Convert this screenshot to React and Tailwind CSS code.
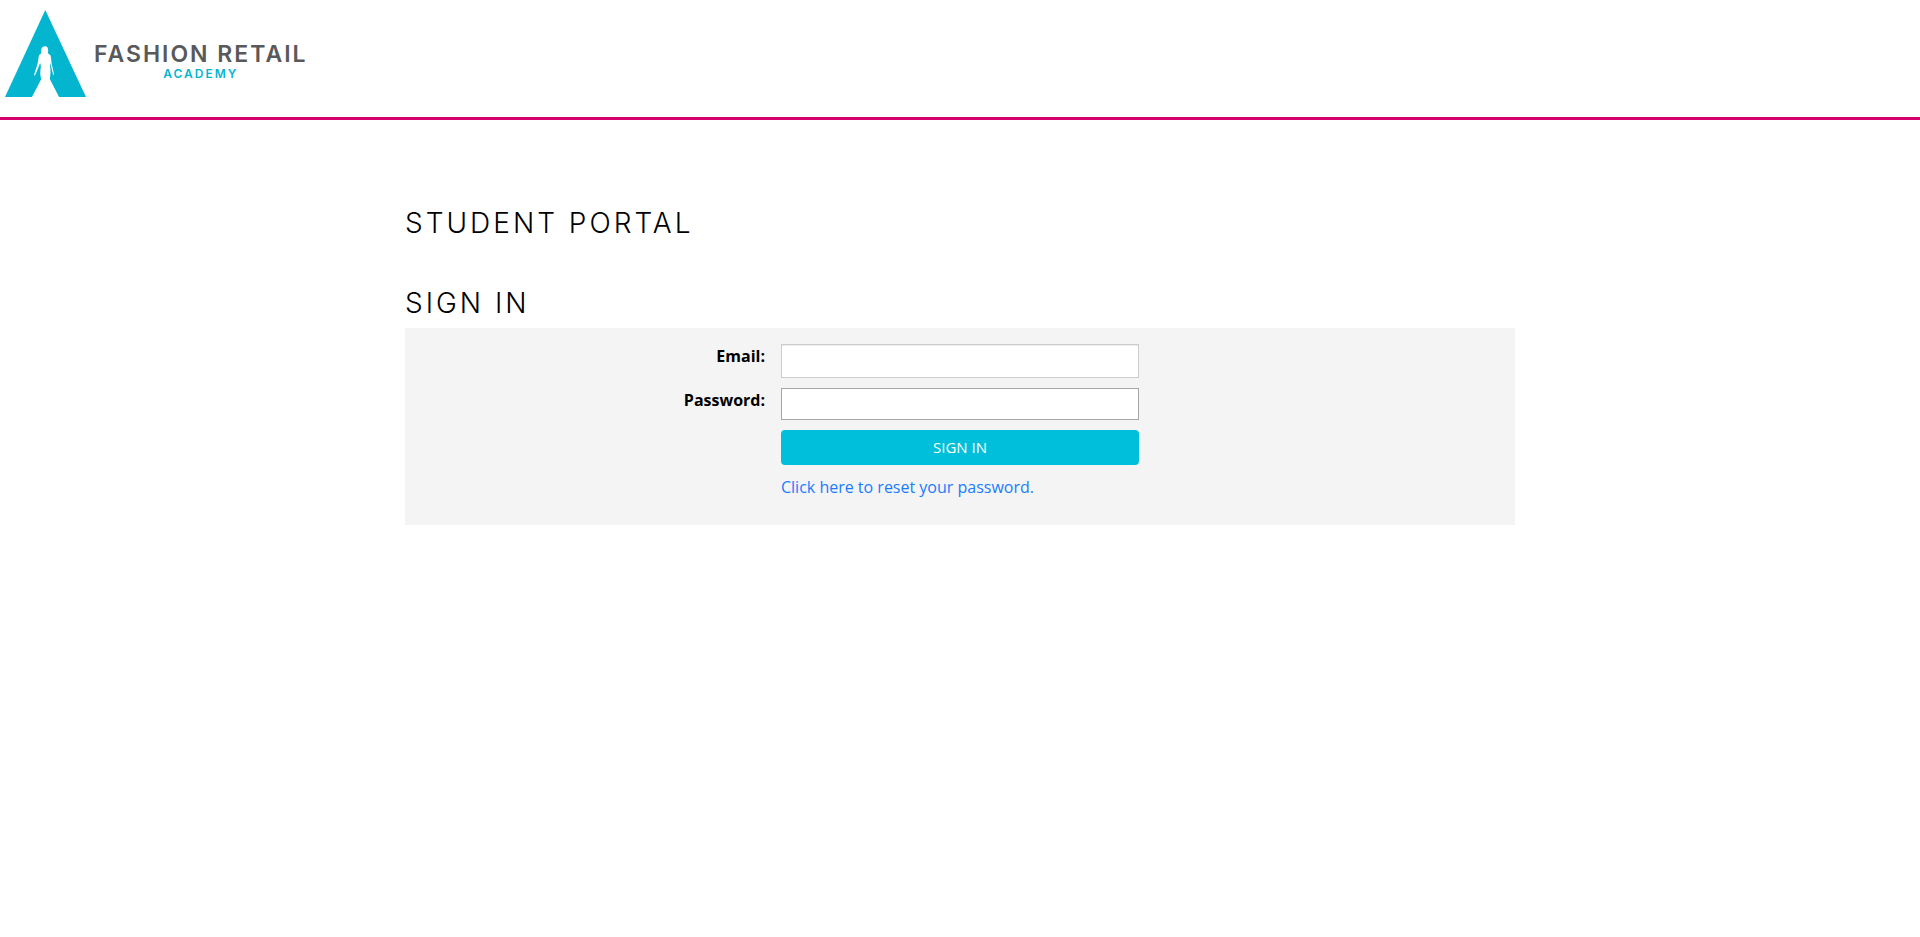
function Logo() {
  return (
    <a href="#" className="flex items-start gap-2" aria-label="Fashion Retail Academy">
      <svg className="h-[87px] w-[81px] shrink-0" viewBox="5 10 81 87" aria-hidden="true">
        <path fill="#04b5d0" d="M45.3 10 86 97H5z" />
        <path
          fill="#fff"
          d="M45 46.3c-2.300 0-3.600 1.300-3.700 3.200-.1 1.500 0 2.900-.3 4.200-1.500.5-2.100 1.400-2.300 2.900-.3 3-.8 6.500-1.800 9.400-.8 3-2 5.700-2.800 8.800l.4.900c.9-.6 1.300-1.700 1.800-3.100 1-2.900 2.600-5.700 3.800-9.600.6 1.600.9 2.600.7 4.200-.5 2.800-.7 5.800-.3 8.700.1 1.300.5 2.200.8 3.100L31.900 97.100h27.200L49.800 79c.6-3 .9-6.500.6-9.500-.2-2.200-.5-4.300-.1-6.500.7 3 1.300 6.200 2.200 9 .4 1.300.6 2.600 1.200 3.200l.3-1.200c-.7-3.300-1.700-7-2.300-10.200-.5-2.700-.5-5.600-1-7.500-.3-1.500-1.200-2.200-2.600-2.600-.1-1.300.1-2.900 0-4.200-.2-2-1.200-3.200-3.100-3.200z"
        />
      </svg>
      <span className="mt-8 flex flex-col items-center font-['Inter','Liberation_Sans',sans-serif]">
        <span className="text-[23px] leading-6 font-semibold tracking-[2px] text-[#58595b]">FASHION RETAIL</span>
        <span className="text-xs leading-4 font-semibold tracking-[2px] text-[#04b5d0]">ACADEMY</span>
      </span>
    </a>
  );
}

const heading =
  "font-['Inter','Liberation_Sans',sans-serif] text-[28px] leading-10 font-light tracking-[3px] uppercase text-black";

export default function App() {
  return (
    <div className="min-h-screen bg-white font-['Open_Sans','Liberation_Sans',sans-serif] text-base text-black">
      <header className="flex h-[120px] border-b-3 border-[#d6006d] pt-[10px] pl-[5px]">
        <Logo />
      </header>
      <main className="mx-auto max-w-[1110px] pt-[83px]">
        <h1 className={heading}>Student Portal</h1>
        <h2 className={`mt-10 ${heading}`}>Sign In</h2>
        <form
          className="mt-[5px] grid grid-cols-[1fr_358px_1fr] gap-x-4 gap-y-[10px] bg-[#f4f4f4] pt-4 pb-[26px]"
          onSubmit={(e) => e.preventDefault()}
        >
          <label htmlFor="email" className="text-right leading-6 font-bold">
            Email:
          </label>
          <input
            id="email"
            type="email"
            className="col-start-2 h-[34px] w-full border border-[#ccc] bg-white px-3 shadow-[inset_0_1px_1px_rgba(0,0,0,0.075)]"
          />
          <label htmlFor="password" className="col-start-1 text-right leading-6 font-bold">
            Password:
          </label>
          <input
            id="password"
            type="password"
            className="col-start-2 h-8 w-full border border-[#a6a6a6] bg-white px-3"
          />
          <button
            type="submit"
            className="col-start-2 h-[35px] rounded-[4px] bg-[#00bfda] text-[15px] text-white"
          >
            SIGN IN
          </button>
          <a href="#reset" className="col-start-2 justify-self-start leading-6 text-[#1a7cff]">
            Click here to reset your password.
          </a>
        </form>
      </main>
    </div>
  );
}
